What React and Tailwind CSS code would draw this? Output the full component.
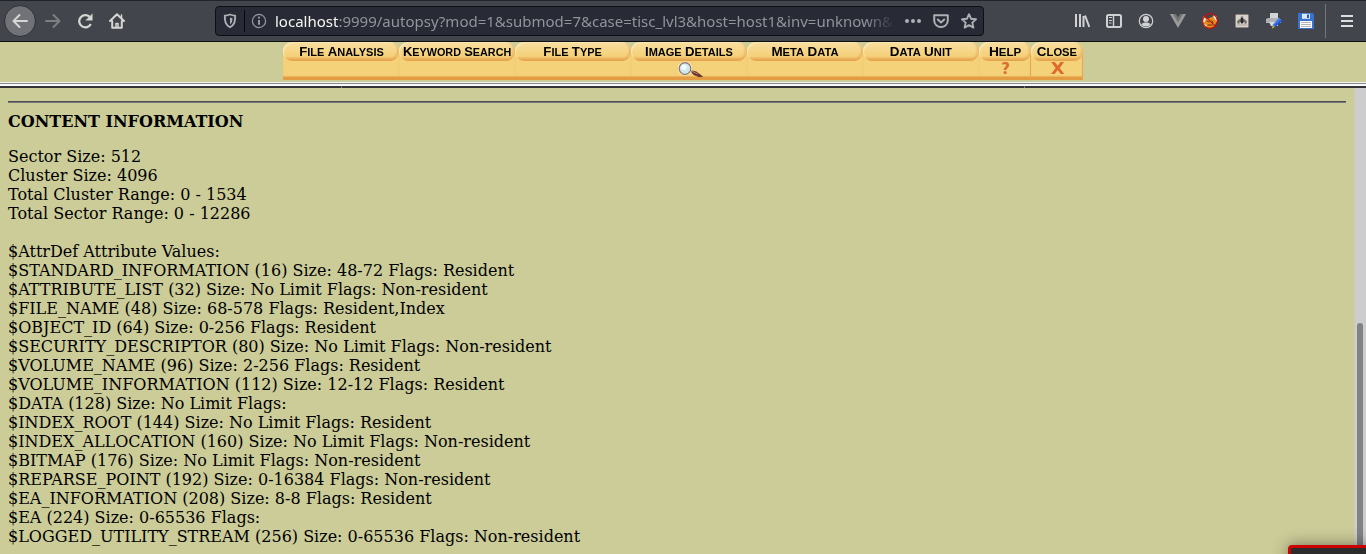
const tabs = [
  { label: ['File', 'Analysis'], width: 'w-[116px]', scale: 'scale-x-[1.1]' },
  { label: ['Keyword', 'Search'], width: 'w-[116px]', scale: 'scale-x-[1.08]' },
  { label: ['File', 'Type'], width: 'w-[116px]', scale: 'scale-x-[1.1]' },
  { label: ['Image', 'Details'], width: 'w-[116px]', scale: 'scale-x-[1.1]', icon: 'lens' },
  { label: ['Meta', 'Data'], width: 'w-[116px]', scale: 'scale-x-[1.12]' },
  { label: ['Data', 'Unit'], width: 'w-[116px]', scale: 'scale-x-[1.12]' },
  { label: ['Help'], width: 'w-[52px]', scale: 'scale-x-[1.15]', icon: '?' },
  { label: ['Close'], width: 'w-[52px]', scale: 'scale-x-[1.12]', icon: 'X' },
];

const summary = [
  'Sector Size: 512',
  'Cluster Size: 4096',
  'Total Cluster Range: 0 - 1534',
  'Total Sector Range: 0 - 12286',
];

const attributes = [
  '$AttrDef Attribute Values:',
  '$STANDARD_INFORMATION (16) Size: 48-72 Flags: Resident',
  '$ATTRIBUTE_LIST (32) Size: No Limit Flags: Non-resident',
  '$FILE_NAME (48) Size: 68-578 Flags: Resident,Index',
  '$OBJECT_ID (64) Size: 0-256 Flags: Resident',
  '$SECURITY_DESCRIPTOR (80) Size: No Limit Flags: Non-resident',
  '$VOLUME_NAME (96) Size: 2-256 Flags: Resident',
  '$VOLUME_INFORMATION (112) Size: 12-12 Flags: Resident',
  '$DATA (128) Size: No Limit Flags:',
  '$INDEX_ROOT (144) Size: No Limit Flags: Resident',
  '$INDEX_ALLOCATION (160) Size: No Limit Flags: Non-resident',
  '$BITMAP (176) Size: No Limit Flags: Non-resident',
  '$REPARSE_POINT (192) Size: 0-16384 Flags: Non-resident',
  '$EA_INFORMATION (208) Size: 8-8 Flags: Resident',
  '$EA (224) Size: 0-65536 Flags:',
  '$LOGGED_UTILITY_STREAM (256) Size: 0-65536 Flags: Non-resident',
];

function Icon({ children, className = '' }) {
  return (
    <svg
      viewBox="0 0 16 16"
      className={`block size-4 shrink-0 ${className}`}
      fill="none"
      stroke="currentColor"
      strokeWidth="2"
      strokeLinecap="round"
      strokeLinejoin="round"
    >
      {children}
    </svg>
  );
}

function NavButtons() {
  return (
    <div className="flex items-center pl-1 text-[#d6d6d3]">
      <div className="flex size-8 items-center justify-center rounded-full border border-[#2d2f34] bg-[#717278]">
        <Icon><path d="M15 8H1.500M7.500 2L1.500 8l6 6" /></Icon>
      </div>
      <Icon className="ml-[9px] text-[#7d7f83]"><path d="M1 8h13.500M8.500 2l6 6-6 6" /></Icon>
      <Icon className="ml-4">
        <path d="M13.800 11A6.100 6.100 0 1 1 12.600 3.900" strokeLinecap="butt" strokeWidth="2.200" />
        <path d="M15.300 1V7.300H9z" fill="currentColor" strokeWidth="0.400" />
      </Icon>
      <Icon className="ml-4">
        <path d="M1 8l7-6.800L15 8M3.200 8v6.800h9.600V8" />
        <path d="M7 14V10.500h2V14M12.500 2v3" strokeWidth="1.500" />
      </Icon>
    </div>
  );
}

function AddressBar() {
  return (
    <div className="ml-[90px] flex h-[30px] w-[769px] items-center rounded-[4px] border border-[#0d0f13] bg-[#282a36] text-[#adafb3]">
      <Icon className="ml-[6px]">
        <path d="M8 1.500c2 .9 3.600 1.100 5.200 1.200 0 6-.8 9-5.200 11.600C3.600 11.700 2.800 8.700 2.800 2.700 4.400 2.600 6 2.400 8 1.500z" strokeWidth="1.900" />
        <path d="M8 4.500c1 .4 1.700.5 2.500.6-.1 3.500-.6 5-2.500 6.400z" fill="currentColor" stroke="none" />
      </Icon>
      <div className="ml-[6px] h-[22px] w-px bg-[#08090c]" />
      <Icon className="ml-[6px] text-[#96989e]">
        <circle cx="8" cy="8" r="6.600" strokeWidth="1.200" />
        <path d="M8 7v4.800" strokeLinecap="butt" />
        <circle cx="8" cy="4.700" r="1.100" fill="currentColor" stroke="none" />
      </Icon>
      <div className="ml-2 w-[620px] whitespace-nowrap font-['Noto_Sans',sans-serif] text-[15px] leading-[22px] text-[#92949a] [mask-image:linear-gradient(to_right,black_590px,transparent_620px)]">
        <span className="text-[#f8f8f2]">localhost</span>
        <span>:9999/autopsy?mod=1&amp;submod=7&amp;case=tisc_lvl3&amp;host=host1&amp;inv=unknown&amp;</span>
      </div>
      <Icon className="ml-[10px]">
        <g fill="currentColor" stroke="none">
          <circle cx="2" cy="8" r="2" /><circle cx="8" cy="8" r="2" /><circle cx="14" cy="8" r="2" />
        </g>
      </Icon>
      <Icon className="ml-3">
        <path d="M1.200 2.200h13.600v5c0 4-3 6.800-6.800 6.800S1.200 11.200 1.200 7.200z" strokeWidth="2" />
        <path d="M4.800 6.500L8 9.500l3.200-3" strokeWidth="2" />
      </Icon>
      <Icon className="ml-3">
        <path d="M8 1.200l2 4.500 5 .6-3.700 3.300 1.100 5L8 12.200l-4.400 2.400 1.100-5L1 6.300l5-.6z" strokeWidth="1.900" />
      </Icon>
    </div>
  );
}

function Extensions() {
  return (
    <div className="ml-[90px] flex items-center gap-4 text-[#d0d1d2]">
      <Icon><path d="M2 1v13M6 1v13M9.500 3v11M11 2.500l4.300 11.500" strokeLinecap="butt" /></Icon>
      <Icon>
        <rect x="1" y="2" width="14" height="12" rx="1.500" strokeWidth="2" />
        <path d="M7.500 2v12" strokeWidth="1.400" />
        <path d="M3 4.500h3M3 7.500h3M3 10h2.500" strokeWidth="1" strokeLinecap="butt" />
      </Icon>
      <Icon>
        <circle cx="8" cy="8" r="6.700" strokeWidth="1.200" />
        <circle cx="8" cy="6" r="3" fill="currentColor" stroke="none" />
        <path d="M3.300 11.500c1-1.500 2.500-2 4.700-2s3.700.5 4.700 2c-1.200 1.300-2.800 2-4.700 2s-3.500-.7-4.700-2z" fill="currentColor" stroke="none" />
      </Icon>
      <Icon>
        <path d="M0 1h4l4 7 4-7h4L8 15z" fill="#9b9b9b" stroke="none" />
        <path d="M3 1h3l2 3.500L10 1h3L8 9.500z" fill="#737475" stroke="none" />
      </Icon>
      <Icon>
        <path d="M1 3l4 3 5-2 4-2 1 6-3 6-5 1.500-5-2-1-5z" fill="#e58a1e" stroke="none" />
        <path d="M1 4l3 2-2 4-1.500-1zM11 2l4 2v5l-3-4zM1 11l4 1-1 2z" fill="#eeeae0" stroke="none" />
        <path d="M5 8l2 1M10 8l1 2M6 12h4" stroke="#693512" strokeWidth="1" />
        <circle cx="8" cy="8" r="7.400" stroke="#cc0b0b" strokeWidth="1.100" />
        <path d="M3 2.800l10.200 10.400" stroke="#cc0b0b" strokeWidth="1.100" />
      </Icon>
      <Icon>
        <rect x="1.500" y="1.500" width="13" height="13" rx="1" fill="#d8d1cc" stroke="#8d7b73" strokeWidth="0.600" />
        <path d="M3 10c0-3 2-4 3.500-4L7 3.500h2L9.500 6c1.500 0 3.500 1 3.500 4l-2 1-1-2H6l-1 2z" fill="#77726f" stroke="none" />
        <path d="M7 5h2l.6 4L8 11 6.400 9z" fill="#292a2b" stroke="none" />
        <path d="M3 12h10" stroke="#aaa39d" strokeWidth="1" />
      </Icon>
      <Icon>
        <path d="M4 0h8v6H4z" fill="#d2d3d5" stroke="none" />
        <path d="M0 6l2-1h11l2 2v3H0z" fill="#aeb0b4" stroke="none" />
        <path d="M3 9h9v4H5z" fill="#d9dadd" stroke="none" />
        <path d="M6.500 12L13 5l3 3-7 6z" fill="#3b76ee" stroke="none" />
        <path d="M8 13l7-6 1 1-7 6z" fill="#1c4fe0" stroke="none" />
        <path d="M6.500 12l2.500 2-3 1.800z" fill="#c6a530" stroke="none" />
      </Icon>
      <Icon>
        <path d="M0 0h14.500L16 1.500V16H0z" fill="#3972cf" stroke="none" />
        <path d="M4 .8h8v5H4z" fill="#dce9fa" stroke="none" />
        <path d="M9 1.500h2V5H9z" fill="#285bb4" stroke="none" />
        <path d="M2 8h12v7H2z" fill="#fff" stroke="none" />
        <path d="M3 9.500h10M3 11.500h10M3 13.500h10" stroke="#a4a5a8" strokeWidth="0.800" strokeLinecap="butt" />
      </Icon>
    </div>
  );
}

function Lens() {
  return (
    <svg viewBox="0 0 26 17" className="ml-[2px] block h-[17px] w-[26px] shrink-0">
      <path d="M13.500 9.500l6 1.500 6 4.500-3.500.2-5.500-2.200z" fill="#6b3232" stroke="#6b3232" strokeWidth="0.800" strokeLinejoin="round" />
      <path d="M14 10l7 3" stroke="#b08a76" strokeWidth="0.900" />
      <circle cx="8" cy="7.500" r="7" fill="#fff3cf" />
      <circle cx="8" cy="7.500" r="5.800" fill="#cfe8ea" stroke="#8b7070" strokeWidth="1.200" />
      <circle cx="7" cy="6.200" r="2.600" fill="#f1fdff" />
    </svg>
  );
}

function Tab({ tab }) {
  const small = tab.icon === '?' || tab.icon === 'X';
  return (
    <div className={`flex h-[38px] flex-col ${tab.width}`}>
      <div className="z-10 flex h-[19px] items-center justify-center rounded-[9px] bg-linear-to-b from-[#f8dfa0] via-[#f4d078] via-75% to-[#e39a45] shadow-[inset_-2px_-1px_2px_#e7a65299,inset_1px_1px_1px_#fbebba]">
        <div className={`flex gap-[3px] pt-px font-['Liberation_Sans',sans-serif] text-[10px] font-bold leading-[19px] text-black uppercase ${tab.scale}`}>
          {tab.label.map((word) => (
            <span key={word} className="inline-block first-letter:text-[12px]">{word}</span>
          ))}
        </div>
      </div>
      <div className={`-mt-[10px] flex h-[29px] justify-center border-b-[3px] border-[#e49c43] bg-[#f4d27a] pt-[10px] shadow-[inset_0_-1px_1px_#ecb158] ${small ? 'border-r border-r-[#e9a850] pl-[2px]' : ''}`}>
        {tab.icon === 'lens' && <Lens />}
        {tab.icon === '?' && <span className="font-['DejaVu_Sans',sans-serif] text-[15px] font-bold leading-[17px] text-[#de6b2c]">?</span>}
        {tab.icon === 'X' && <span className="inline-block scale-x-[1.2] font-['DejaVu_Sans',sans-serif] text-[15px] font-bold leading-[17px] text-[#de6b2c]">X</span>}
      </div>
    </div>
  );
}

export default function App() {
  return (
    <div className="relative flex h-[554px] w-[1366px] flex-col overflow-hidden bg-[#cccc99] text-black">
      <header className="flex h-[42px] shrink-0 items-center border-b border-[#0c0d10] bg-[#42454c] shadow-[inset_0_1px_0_#22242a]">
        <NavButtons />
        <AddressBar />
        <Extensions />
        <div className="ml-[11px] h-[34px] w-px bg-[#74767a]" />
        <div className="ml-[15px] flex w-3 flex-col gap-[3px]">
          <i className="h-[2px] bg-[#dedede]" />
          <i className="h-[2px] bg-[#dedede]" />
          <i className="h-[2px] bg-[#dedede]" />
        </div>
      </header>
      <nav className="flex h-10 shrink-0 justify-center">
        {tabs.map((tab) => <Tab key={tab.label.join()} tab={tab} />)}
      </nav>
      <div className="flex h-[6px] shrink-0 flex-col">
        <div className="h-px bg-[#f3f3ee]" />
        <div className="h-px bg-[#89888e]" />
        <div className="h-[2px] bg-[#f8f8f8]" />
        <div className="flex h-[2px] bg-[#333238]">
          <div className="ml-[341px] w-px bg-[#77767b]" />
          <div className="ml-[682px] w-px bg-[#77767b]" />
        </div>
      </div>
      <div className="flex min-h-0 flex-1">
        <main className="flex-1 pr-2 pl-2 font-['DejaVu_Serif',serif] text-[16px] leading-[19px]">
          <hr className="mt-[13px] h-[2px] border-t border-b border-t-[#4e4f50] border-b-[#77777c]" />
          <h1 className="mt-[9px] text-[16px] font-bold">CONTENT INFORMATION</h1>
          <div className="mt-4">{summary.map((line) => <p key={line}>{line}</p>)}</div>
          <div className="mt-[19px]">{attributes.map((line) => <p key={line}>{line}</p>)}</div>
        </main>
        <div className="flex w-3 border-l border-[#cccbbf] bg-[#cdcdcd] pt-[235px] pl-[2px]">
          <div className="w-[6px] rounded-t-full bg-[#7f8382]" />
        </div>
      </div>
      <div className="absolute top-[545px] left-[1288px] h-5 w-[90px] rounded-[4px] border-[3px] border-[#cc0000] bg-[#2c2c2c] shadow-[0_0_16px_#00000070]" />
    </div>
  );
}
